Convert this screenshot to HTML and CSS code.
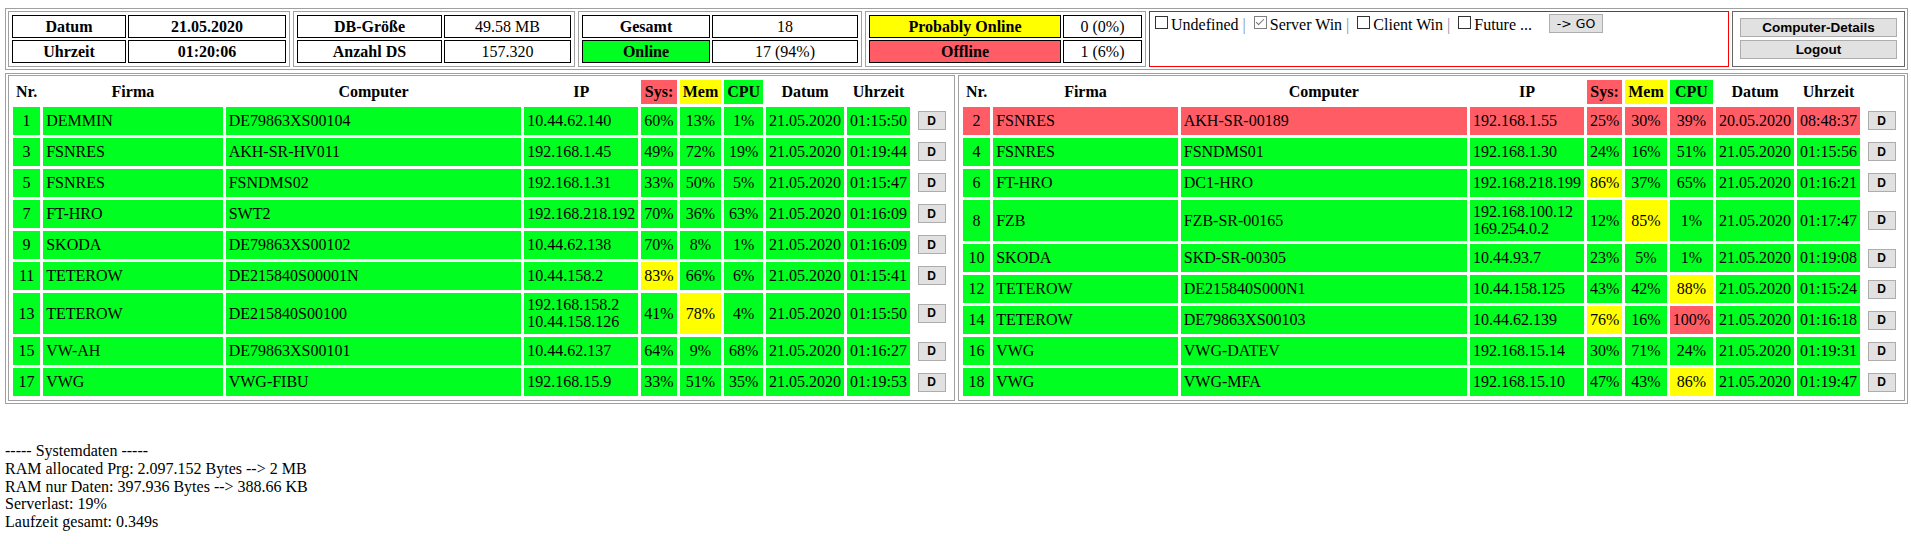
FILE: index.html
```html
<!DOCTYPE html>
<html lang="de">
<head>
    <meta charset="UTF-8">
    <title>Server Monitor</title>
    <link rel="stylesheet" href="styles.css">
</head>
<body>
    <div class="topbar">
        <div class="kv kv1">
            <div class="cell b">Datum</div><div class="cell b">21.05.2020</div>
            <div class="cell b">Uhrzeit</div><div class="cell b">01:20:06</div>
        </div>
        <div class="kv kv2">
            <div class="cell b">DB-Größe</div><div class="cell">49.58 MB</div>
            <div class="cell b">Anzahl DS</div><div class="cell">157.320</div>
        </div>
        <div class="kv kv3">
            <div class="cell b">Gesamt</div><div class="cell">18</div>
            <div class="cell b ok">Online</div><div class="cell">17 (94%)</div>
        </div>
        <div class="kv kv4">
            <div class="cell b warn">Probably Online</div><div class="cell">0 (0%)</div>
            <div class="cell b bad">Offline</div><div class="cell">1 (6%)</div>
        </div>
        <form class="filter">
            <input type="checkbox">Undefined <span class="sep">|</span>
            <input type="checkbox" checked>Server Win <span class="sep">|</span>
            <input type="checkbox">Client Win <span class="sep">|</span>
            <input type="checkbox">Future ...<button type="button" class="btn btn-go">-&gt; GO</button>
        </form>
        <div class="actions">
            <button type="button" class="btn btn-wide">Computer-Details</button>
            <button type="button" class="btn btn-wide">Logout</button>
        </div>
    </div>

    <div class="main">
        <div class="panel">
            <table class="list">
                <tr>
                    <th>Nr.</th><th class="grow">Firma</th><th class="grow">Computer</th><th>IP</th>
                    <th class="bad">Sys:</th><th class="warn">Mem</th><th class="ok">CPU</th>
                    <th>Datum</th><th>Uhrzeit</th><th></th>
                </tr>
                <tr><td class="c">1</td><td>DEMMIN</td><td>DE79863XS00104</td><td>10.44.62.140</td><td class="c">60%</td><td class="c">13%</td><td class="c">1%</td><td class="c">21.05.2020</td><td class="c">01:15:50</td><td class="act"><button type="button" class="btn btn-d">D</button></td></tr>
                <tr><td class="c">3</td><td>FSNRES</td><td>AKH-SR-HV011</td><td>192.168.1.45</td><td class="c">49%</td><td class="c">72%</td><td class="c">19%</td><td class="c">21.05.2020</td><td class="c">01:19:44</td><td class="act"><button type="button" class="btn btn-d">D</button></td></tr>
                <tr><td class="c">5</td><td>FSNRES</td><td>FSNDMS02</td><td>192.168.1.31</td><td class="c">33%</td><td class="c">50%</td><td class="c">5%</td><td class="c">21.05.2020</td><td class="c">01:15:47</td><td class="act"><button type="button" class="btn btn-d">D</button></td></tr>
                <tr><td class="c">7</td><td>FT-HRO</td><td>SWT2</td><td>192.168.218.192</td><td class="c">70%</td><td class="c">36%</td><td class="c">63%</td><td class="c">21.05.2020</td><td class="c">01:16:09</td><td class="act"><button type="button" class="btn btn-d">D</button></td></tr>
                <tr><td class="c">9</td><td>SKODA</td><td>DE79863XS00102</td><td>10.44.62.138</td><td class="c">70%</td><td class="c">8%</td><td class="c">1%</td><td class="c">21.05.2020</td><td class="c">01:16:09</td><td class="act"><button type="button" class="btn btn-d">D</button></td></tr>
                <tr><td class="c">11</td><td>TETEROW</td><td>DE215840S00001N</td><td>10.44.158.2</td><td class="c warn">83%</td><td class="c">66%</td><td class="c">6%</td><td class="c">21.05.2020</td><td class="c">01:15:41</td><td class="act"><button type="button" class="btn btn-d">D</button></td></tr>
                <tr><td class="c">13</td><td>TETEROW</td><td>DE215840S00100</td><td>192.168.158.2<br>10.44.158.126</td><td class="c">41%</td><td class="c warn">78%</td><td class="c">4%</td><td class="c">21.05.2020</td><td class="c">01:15:50</td><td class="act"><button type="button" class="btn btn-d">D</button></td></tr>
                <tr><td class="c">15</td><td>VW-AH</td><td>DE79863XS00101</td><td>10.44.62.137</td><td class="c">64%</td><td class="c">9%</td><td class="c">68%</td><td class="c">21.05.2020</td><td class="c">01:16:27</td><td class="act"><button type="button" class="btn btn-d">D</button></td></tr>
                <tr><td class="c">17</td><td>VWG</td><td>VWG-FIBU</td><td>192.168.15.9</td><td class="c">33%</td><td class="c">51%</td><td class="c">35%</td><td class="c">21.05.2020</td><td class="c">01:19:53</td><td class="act"><button type="button" class="btn btn-d">D</button></td></tr>
            </table>
        </div>
        <div class="panel">
            <table class="list">
                <tr>
                    <th>Nr.</th><th class="grow">Firma</th><th class="grow">Computer</th><th>IP</th>
                    <th class="bad">Sys:</th><th class="warn">Mem</th><th class="ok">CPU</th>
                    <th>Datum</th><th>Uhrzeit</th><th></th>
                </tr>
                <tr class="down"><td class="c">2</td><td>FSNRES</td><td>AKH-SR-00189</td><td>192.168.1.55</td><td class="c">25%</td><td class="c">30%</td><td class="c">39%</td><td class="c">20.05.2020</td><td class="c">08:48:37</td><td class="act"><button type="button" class="btn btn-d">D</button></td></tr>
                <tr><td class="c">4</td><td>FSNRES</td><td>FSNDMS01</td><td>192.168.1.30</td><td class="c">24%</td><td class="c">16%</td><td class="c">51%</td><td class="c">21.05.2020</td><td class="c">01:15:56</td><td class="act"><button type="button" class="btn btn-d">D</button></td></tr>
                <tr><td class="c">6</td><td>FT-HRO</td><td>DC1-HRO</td><td>192.168.218.199</td><td class="c warn">86%</td><td class="c">37%</td><td class="c">65%</td><td class="c">21.05.2020</td><td class="c">01:16:21</td><td class="act"><button type="button" class="btn btn-d">D</button></td></tr>
                <tr><td class="c">8</td><td>FZB</td><td>FZB-SR-00165</td><td>192.168.100.12<br>169.254.0.2</td><td class="c">12%</td><td class="c warn">85%</td><td class="c">1%</td><td class="c">21.05.2020</td><td class="c">01:17:47</td><td class="act"><button type="button" class="btn btn-d">D</button></td></tr>
                <tr><td class="c">10</td><td>SKODA</td><td>SKD-SR-00305</td><td>10.44.93.7</td><td class="c">23%</td><td class="c">5%</td><td class="c">1%</td><td class="c">21.05.2020</td><td class="c">01:19:08</td><td class="act"><button type="button" class="btn btn-d">D</button></td></tr>
                <tr><td class="c">12</td><td>TETEROW</td><td>DE215840S000N1</td><td>10.44.158.125</td><td class="c">43%</td><td class="c">42%</td><td class="c warn">88%</td><td class="c">21.05.2020</td><td class="c">01:15:24</td><td class="act"><button type="button" class="btn btn-d">D</button></td></tr>
                <tr><td class="c">14</td><td>TETEROW</td><td>DE79863XS00103</td><td>10.44.62.139</td><td class="c warn">76%</td><td class="c">16%</td><td class="c bad">100%</td><td class="c">21.05.2020</td><td class="c">01:16:18</td><td class="act"><button type="button" class="btn btn-d">D</button></td></tr>
                <tr><td class="c">16</td><td>VWG</td><td>VWG-DATEV</td><td>192.168.15.14</td><td class="c">30%</td><td class="c">71%</td><td class="c">24%</td><td class="c">21.05.2020</td><td class="c">01:19:31</td><td class="act"><button type="button" class="btn btn-d">D</button></td></tr>
                <tr><td class="c">18</td><td>VWG</td><td>VWG-MFA</td><td>192.168.15.10</td><td class="c">47%</td><td class="c">43%</td><td class="c warn">86%</td><td class="c">21.05.2020</td><td class="c">01:19:47</td><td class="act"><button type="button" class="btn btn-d">D</button></td></tr>
            </table>
        </div>
    </div>

    <div class="sysinfo">
        ----- Systemdaten -----<br>
        RAM allocated Prg: 2.097.152 Bytes --&gt; 2 MB<br>
        RAM nur Daten: 397.936 Bytes --&gt; 388.66 KB<br>
        Serverlast: 19%<br>
        Laufzeit gesamt: 0.349s
    </div>
</body>
</html>
```

FILE: styles.css
```css
body {
    margin: 8px 3px 8px 5px;
    font-family: "Liberation Serif", "Times New Roman", serif;
    font-size: 16px;
    line-height: 1.107;
    color: #000;
    background: #fff;
}

/* status colours */
.ok { background-color: #00ff21; }
.warn { background-color: #ffff00; }
.bad { background-color: #ff5c66; }

/* top bar */
.topbar {
    display: flex;
    gap: 3px;
    border: 1px solid #a0a0a0;
    padding: 2px;
}
.kv {
    display: grid;
    gap: 2px;
    padding: 3px;
    border: 1px solid #a0a0a0;
}
.kv1 { grid-template-columns: 114px 158px; }
.kv2 { grid-template-columns: 145px 127px; }
.kv3 { grid-template-columns: 128px 146px; }
.kv4 { grid-template-columns: 192px 79px; }
.cell {
    height: 23px;
    line-height: 21px;
    box-sizing: border-box;
    border: 1px solid #000;
    text-align: center;
    white-space: nowrap;
}
.cell.b { font-weight: bold; }

.filter {
    width: 580px;
    box-sizing: border-box;
    margin: 0;
    padding: 1px;
    line-height: 18px;
    border: 1px solid #ff0000;
    white-space: nowrap;
}
.filter input[type="checkbox"] {
    appearance: none;
    position: relative;
    width: 13px;
    height: 13px;
    margin: 3px 3px 3px 4px;
    border: 1px solid #333;
    background: #fff;
    vertical-align: -2px;
}
.filter input[type="checkbox"]:checked {
    border-color: #808080;
}
.filter input[type="checkbox"]:checked::before {
    content: "";
    position: absolute;
    left: 3px;
    top: 0;
    width: 3px;
    height: 7px;
    border: solid #707070;
    border-width: 0 1.5px 1.5px 0;
    transform: rotate(45deg);
}
.sep { color: #8090a8; }

.actions {
    flex: 1;
    display: flex;
    flex-direction: column;
    gap: 3px;
    padding: 6px 7px;
    border: 1px solid #666;
}

.btn {
    background: #e1e1e1;
    border: 1px solid #adadad;
    color: #000;
    padding: 0;
    cursor: pointer;
}
.btn-wide {
    height: 19px;
    width: 100%;
    font: bold 13.5px "Liberation Sans", Arial, sans-serif;
}
.btn-go {
    height: 19px;
    width: 54px;
    margin: 1px 0 0 17px;
    vertical-align: top;
    font: 12.5px "DejaVu Sans", "Liberation Sans", sans-serif;
}
.btn-d {
    width: 28px;
    height: 19px;
    margin: 1.5px;
    font: bold 12px "Liberation Sans", Arial, sans-serif;
}

/* main tables */
.main {
    display: flex;
    gap: 3px;
    margin-top: 3px;
    padding: 1px 2px 2px;
    border: 1px solid #a0a0a0;
}
.panel {
    flex: 1 1 0;
    padding: 1px;
    border: 1px solid #a0a0a0;
}
.list {
    width: 100%;
    border-collapse: separate;
    border-spacing: 3px;
}
.list th,
.list td {
    padding: 3px;
    white-space: nowrap;
}
.list th {
    width: 1px;
}
.list th.grow {
    width: auto;
}
.list td {
    text-align: left;
    background-color: #00ff21;
}
.list td.c { text-align: center; }
.list td.warn { background-color: #ffff00; }
.list td.bad,
.list tr.down td { background-color: #ff5c66; }
.list td.act,
.list tr.down td.act { background: none; }

.sysinfo {
    margin-top: 38px;
    line-height: 17.75px;
}
```
